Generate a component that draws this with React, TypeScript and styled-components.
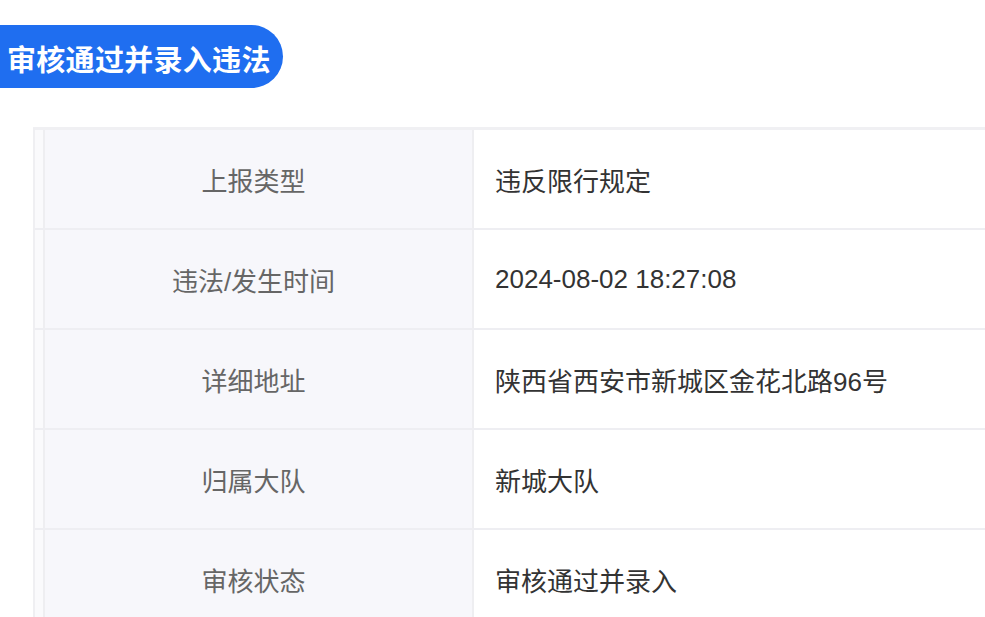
import React from "react";
import styled, { createGlobalStyle } from "styled-components";

const Global = createGlobalStyle`
  html, body {
    margin: 0;
    padding: 0;
    background: #ffffff;
    overflow: hidden;
  }
  body {
    font-family: "Liberation Sans", "Noto Sans CJK SC", sans-serif;
  }
`;

const Page = styled.div`
  width: 985px;
  height: 617px;
  padding-top: 25px;
  box-sizing: border-box;
  display: flex;
  flex-direction: column;
  overflow: hidden;
`;

const TitleBadge = styled.div`
  flex-shrink: 0;
  align-self: flex-start;
  height: 63px;
  width: 283px;
  box-sizing: border-box;
  padding-left: 7px;
  padding-top: 3px;
  display: flex;
  align-items: center;
  background: #1f6ef0;
  border-radius: 0 32px 32px 0;
  color: #ffffff;
  font-family: "Noto Sans CJK SC", sans-serif;
  font-size: 29px;
  font-weight: 700;
  letter-spacing: 0.3px;
  white-space: nowrap;
`;

const Table = styled.div`
  flex-shrink: 0;
  margin-top: 39px;
  margin-left: 33px;
  display: grid;
  grid-template-columns: 439px 1fr;
  border-top: 3px solid #f0f0f3;
  border-left: 2px solid #efeff2;
`;

const LabelCell = styled.div`
  height: 98px;
  display: flex;
  align-items: center;
  justify-content: center;
  background: #f7f7fb;
  box-shadow: inset 8px 0 0 #fafafc, inset 10px 0 0 #eeeef1;
  border-right: 2px solid #eeeef1;
  border-bottom: 2px solid #eeeef2;
  color: #666666;
  font-size: 26px;
`;

const ValueCell = styled.div`
  height: 98px;
  display: flex;
  align-items: center;
  padding-left: 21px;
  background: #ffffff;
  border-bottom: 2px solid #eeeef2;
  color: #333333;
  font-size: 26px;
  white-space: nowrap;
`;

const rows: [string, string][] = [
  ["上报类型", "违反限行规定"],
  ["违法/发生时间", "2024-08-02 18:27:08"],
  ["详细地址", "陕西省西安市新城区金花北路96号"],
  ["归属大队", "新城大队"],
  ["审核状态", "审核通过并录入"],
];

export default function App() {
  return (
    <Page>
      <Global />
      <TitleBadge>审核通过并录入违法</TitleBadge>
      <Table>
        {rows.map(([label, value]) => (
          <React.Fragment key={label}>
            <LabelCell>{label}</LabelCell>
            <ValueCell>{value}</ValueCell>
          </React.Fragment>
        ))}
      </Table>
    </Page>
  );
}
